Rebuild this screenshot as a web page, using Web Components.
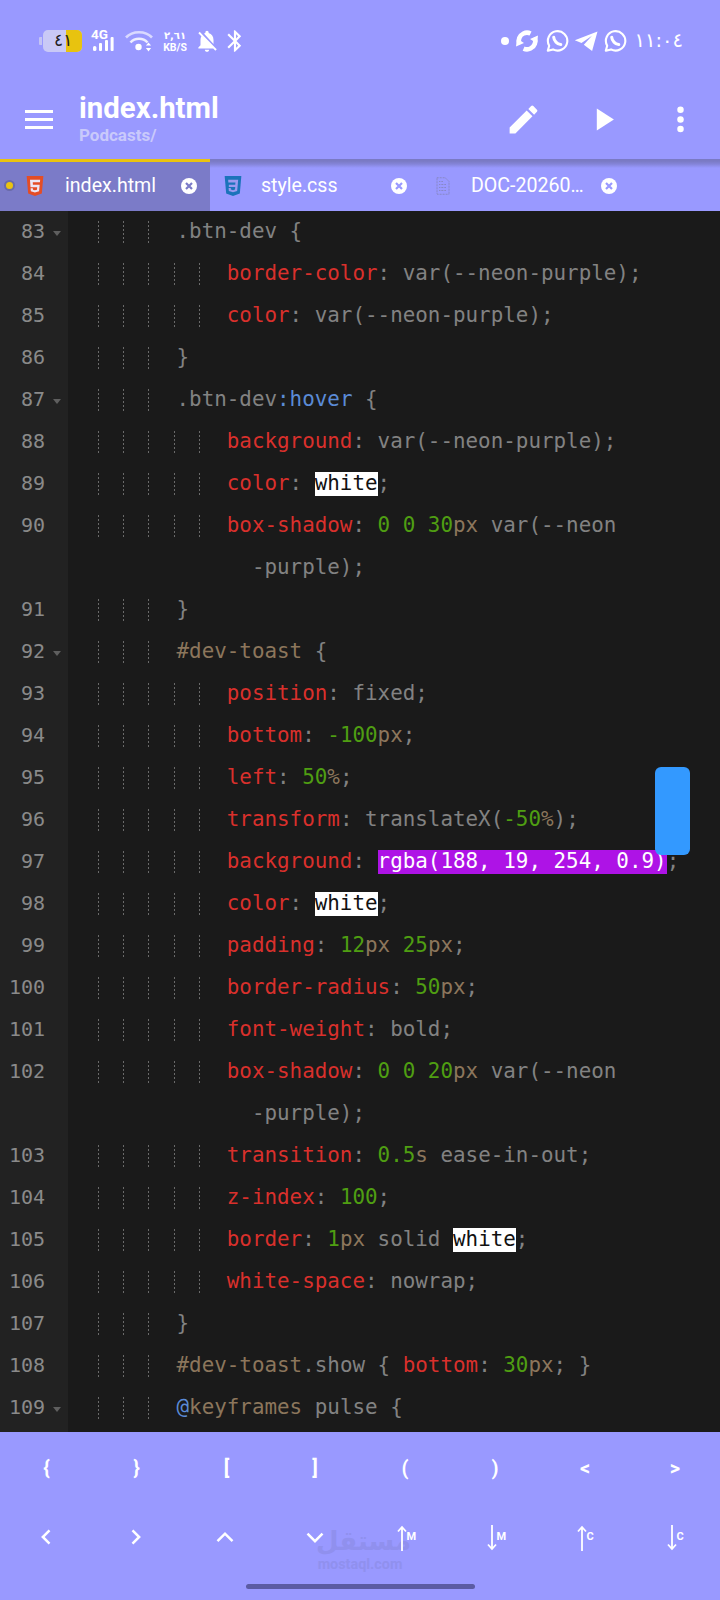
<!DOCTYPE html>
<html lang="en"><head><meta charset="utf-8"><title>index.html</title>
<style>
html,body{margin:0;padding:0;width:720px;height:1600px;overflow:hidden;background:#1a1a1a;font-family:Roboto,"Liberation Sans",sans-serif}
</style>
<script>
function def(name, css, html){
  customElements.define(name, class extends HTMLElement{
    constructor(){super();this.attachShadow({mode:'open'});}
    connectedCallback(){
      const body = typeof html==='function'?html(this):html;
      this.shadowRoot.innerHTML='<style>'+css+'</style>'+body;
    }
  });
}
def('status-bar',`
:host{display:flex;align-items:center;height:80px;box-sizing:border-box;padding:2px 37px 0 39px;background:#9999ff;color:#fff}
.grow{flex:1}
`,`<slot name="left"></slot><div class="grow"></div><slot name="right"></slot>`);

def('status-group',`
:host{display:flex;align-items:center}
::slotted(*){flex:none}
`,`<slot></slot>`);

def('battery-icon',`
:host{display:block;position:relative;width:43px;height:22px}
.nub{position:absolute;left:0;top:7px;width:3px;height:8px;background:#c4c4f4;border-radius:1px 0 0 1px}
.body{position:absolute;left:4px;top:0;right:0;bottom:0;border-radius:5px;overflow:hidden;display:flex;background:#c9c9f6}
.fill{margin-left:auto;width:16px;background:#e8c30f}
.t{position:absolute;left:15px;top:0;width:18px;text-align:center;font:400 17px/21px "DejaVu Sans",sans-serif;color:#222}
`,`<div class="nub"></div><div class="body"><div class="fill"></div></div><span class="t">٤١</span>`);

def('signal-icon',`
:host{display:block;position:relative;width:23px;height:22px;margin-left:9px}
.t{position:absolute;left:0;top:-2px;font:700 13.500px/13px Roboto,sans-serif;color:#fff}
svg{position:absolute;left:0;top:0}
`,`<span class="t">4G</span><svg width="23" height="22" viewBox="0 0 23 22"><g fill="#fff"><rect x="2" y="16" width="3.4" height="5" rx="1.6"/><rect x="8" y="13" width="3" height="8" rx="1"/><rect x="14" y="10" width="3" height="11" rx="1"/><rect x="19.6" y="7" width="3" height="14" rx="1"/></g></svg>`);

def('wifi-icon',`
:host{display:block;width:28px;height:22px;margin-left:11px}
`,`<svg width="28" height="22" viewBox="0 0 28 22" fill="none"><path d="M1 7.500C7.500 .5 20.500 .5 27 7.500" stroke="#d9d9ff" stroke-width="2.600"/><path d="M5.500 12.500C10 7.500 18 7.500 22.500 12.500" stroke="#eeeeff" stroke-width="2.600"/><circle cx="13.500" cy="17" r="3.200" fill="#fff"/><path d="M23.500 12.500l2.600 3h-5.200zM23.500 21.500l2.600-3.500h-5.200z" fill="#fff"/></svg>`);

def('speed-icon',`
:host{display:flex;flex-direction:column;align-items:center;width:26px;margin-left:9px;color:#fff}
.a{font:700 10px/12px "DejaVu Sans",sans-serif}
.b{font:700 10.500px/11px Roboto,sans-serif;white-space:nowrap}
`,`<span class="a">٢,٦١</span><span class="b">KB/S</span>`);

def('svg-icon',`
:host{display:block;line-height:0}
`,(h)=>{
  const s=h.getAttribute('size')||24, i=h.getAttribute('name');
  const P={
   bell:'<path fill="#fff" d="M20 18.690L7.840 6.140 5.270 3.490 4 4.760l2.800 2.800v.01c-.52.99-.8 2.160-.8 3.420v5l-2 2v1h13.730l2 2L21 19.720l-1-1.030zM12 22c1.110 0 2-.89 2-2h-4c0 1.110.89 2 2 2zm6-7.320V11c0-3.080-1.640-5.640-4.500-6.320V4c0-.83-.67-1.500-1.500-1.500s-1.500.67-1.500 1.500v.68c-.15.03-.29.08-.42.12-.1.03-.2.07-.3.11h-.01c-.2.08-.4.17-.59.27-.01 0-.01 0-.02.01L18 14.680z"/>',
   bt:'<path fill="#fff" d="M17.710 7.710L12 2h-1v7.590L6.410 5 5 6.410 10.590 12 5 17.590 6.410 19 11 14.410V22h1l5.710-5.710-4.300-4.290 4.300-4.290zM13 5.830l1.880 1.880L13 9.590V5.830zm1.880 10.460L13 18.170v-3.760l1.880 1.880z"/>',
   sync:'<circle cx="12" cy="12" r="8.300" fill="none" stroke="#fff" stroke-width="4.600" stroke-dasharray="20 6.100" transform="rotate(-25 12 12)"/><path fill="#fff" d="M23 6.500l-1 8-7-4.500zM1 17.500l1-8 7 4.500z"/>',
   wa:'<path fill="none" stroke="#fff" stroke-width="2.100" stroke-linejoin="round" d="M2.800 21.800l1.400-5.100A9.700 9.700 0 1 1 8 20.400z"/><path fill="none" stroke="#fff" stroke-width="3" stroke-linecap="round" d="M8.700 8.200c.2 3.600 3.500 7 7.100 7.400"/>',
   tg:'<path fill="#fff" d="M23.500 2.500L.8 11.200l6.700 2.700L18 6.700l-8.200 9 8.300 6.300z"/>',
   pencil:'<path fill="#fff" d="M3 17.250V21h3.750L17.810 9.940l-3.750-3.750L3 17.250zM20.710 7.040a1 1 0 0 0 0-1.410l-2.340-2.340a1 1 0 0 0-1.410 0l-1.830 1.830 3.750 3.750 1.830-1.830z"/>',
   play:'<path fill="#fff" d="M7 4.900v14.200l11.100-7.100z"/>',
   more:'<g fill="#fff"><circle cx="12" cy="5.700" r="2.100"/><circle cx="12" cy="12" r="2.100"/><circle cx="12" cy="18.100" r="2.100"/></g>',
   left:'<path fill="none" stroke="#fff" stroke-width="3" d="M15 4l-8 8 8 8"/>',
   right:'<path fill="none" stroke="#fff" stroke-width="3" d="M9 4l8 8-8 8"/>',
   up:'<path fill="none" stroke="#fff" stroke-width="3" d="M3 17l9-9 9 9"/>',
   down:'<path fill="none" stroke="#fff" stroke-width="3" d="M3 8l9 9 9-9"/>',
   html:'<path fill="#e44d26" d="M2 0h20l-1.800 21L12 24l-8.200-3z"/><path fill="#ece6f5" d="M6 4.500h12.200l-.3 3H9.300l.2 3h8.100l-.7 7.700-5 1.500-4.900-1.500-.3-3.500h2.700l.2 1.700 2.300.7 2.500-.7.2-3H6.600z"/>',
   css:'<path fill="#1b73ba" d="M2 0h20l-1.800 21L12 24l-8.200-3z"/><path fill="#9a9af0" d="M6.200 4.500h12l-.7 8.200-.5 5.300-5 1.600-5-1.600-.3-3.500h2.600l.2 1.700 2.500.8 2.400-.8.300-3H7v-2.700h7.700l.2-2.700H6.400z"/>',
   doc:'<g fill="none" stroke="#8080ac" stroke-width="1.200" stroke-dasharray="1 1"><path d="M4 1h11l5 5v17H4zM7 10h10M7 14h10M7 18h10M7 6h6"/></g>'
  };
  return '<svg width="'+s+'" height="'+s+'" viewBox="0 0 24 24">'+(P[i]||'')+'</svg>';
});

def('app-bar',`
:host{display:flex;align-items:center;height:79px;box-sizing:border-box;background:#9999ff;color:#fff;padding:0 21px 0 25px}
.menu{width:28px;display:flex;flex-direction:column;gap:5.500px;margin-right:26px}
.menu i{display:block;height:2.500px;background:#fff}
.title{flex:1;display:flex;flex-direction:column;margin-top:-4px}
.t1{font:700 29.400px/34px Roboto,sans-serif}
.t2{font:700 17px/20px Roboto,sans-serif;color:#c9c9fb}
.acts{display:flex;align-items:center}
`,`<div class="menu"><i></i><i></i><i></i></div><div class="title"><span class="t1"><slot name="title"></slot></span><span class="t2"><slot name="path"></slot></span></div><div class="acts"><slot></slot></div>`);

def('tab-bar',`
:host{display:flex;height:52px;background:linear-gradient(#7a7ac4 0 2px,#8484d8 5px,#9999ff 9px)}
`,`<slot></slot>`);

def('tab-item',`
:host{display:flex;align-items:center;flex:none;width:210px;height:52px;box-sizing:border-box;position:relative;color:#fff;padding:1px 0 0 11px}
:host([active]){background:#7b7bc8;border-top:3px solid #eac30f;padding:0 0 2px 6px}
.dot{width:7px;height:7px;border-radius:50%;background:#eac30f;box-shadow:0 0 0 2px #6a6aa8;flex:none;margin-right:10px}
.ic{display:flex;flex:none;width:24px;justify-content:center;margin-right:16px}
:host([active]) .ic{margin-right:18px}
.lab{flex:none;width:129px;font:400 19.600px/24px Roboto,sans-serif;white-space:nowrap}
:host([active]) .lab{width:115px}
.x{flex:none;width:16px;height:16px;border-radius:50%;background:#fff;display:block;margin-left:1px}
`,(h)=>`${h.hasAttribute('active')?'<span class="dot"></span>':''}<span class="ic"><slot name="icon"></slot></span><span class="lab"><slot></slot></span><svg class="x" viewBox="0 0 16 16"><path d="M5 5l6 6M11 5l-6 6" stroke="${h.hasAttribute('active')?'#7b7bc8':'#9999ff'}" stroke-width="2.200"/></svg>`);

def('code-editor',`
:host{display:block;position:relative;height:1221px;overflow:hidden;background:#1a1a1a;font:20.880px "DejaVu Sans Mono",monospace;color:#828282}
.thumb{position:absolute;left:655px;top:556px;width:35px;height:88px;border-radius:6px;background:#3399ff}
.rail{position:absolute;left:0;top:0;bottom:0;width:68px;background:#222}
.lines{position:relative}
`,`<div class="rail"></div><div class="lines"><slot></slot></div><div class="thumb"></div>`);

def('code-line',`
:host{display:flex;align-items:center;height:42px;white-space:pre}
.g{flex:none;width:68px;height:42px;display:flex;align-items:center;box-sizing:border-box;background:#222;color:#8a8a8a;font-size:20px}
.n{width:45px;text-align:right;margin-top:-2px}
.f{width:0;height:0;border:4.500px solid transparent;border-top:5px solid #5f5f5f;border-bottom:0;margin:2px 0 0 8px}
.c{flex:1;display:flex;align-items:center;padding-left:8px}
.i{display:flex;flex:none;margin-left:-2px;margin-right:2px}
.u{flex:none;width:2ch;height:22px;box-sizing:border-box;position:relative}
.u b{position:absolute;right:0;top:0;bottom:0;width:1px;background:repeating-linear-gradient(#6a6a6a 0 2px,transparent 2px 4px)}
.u.e b{display:none}
.txt{height:24px;line-height:24px;margin-top:-2px}
::slotted(.p){color:#d9302c}
::slotted(.k){color:#4f9e12}
::slotted(.u){color:#8c765c}
::slotted(.h){color:#5b8bd6}
::slotted(.w){display:inline-block;line-height:24px;background:linear-gradient(transparent 1px,#fff 1px);box-shadow:0 1px 0 #fff;color:#111}
::slotted(.m){display:inline-block;line-height:24px;background:linear-gradient(transparent 1px,#ae13e6 1px);box-shadow:0 1px 0 #ae13e6;color:#fff}
`,(h)=>{
  const lv=+h.getAttribute('level')||0, wrap=h.hasAttribute('wrap');
  const n=lv/2;
  let g='';
  for(let i=0;i<n;i++) g+='<span class="u'+((i===n-1||wrap)?' e':'')+'"><b></b></span>';
  const fold=h.hasAttribute('fold')?'<span class="f"></span>':'';
  return '<div class="g"><span class="n">'+(h.getAttribute('num')||'')+'</span>'+fold+'</div><div class="c"><span class="i">'+g+'</span><span class="txt"><slot></slot></span></div>';
});

def('key-bar',`
:host{display:block;position:relative;height:168px;box-sizing:border-box;background:#9999ff;padding-top:2px;color:#fff}
.grid{display:grid;grid-template-columns:repeat(8,90px);grid-auto-rows:69px}
.home{width:229px;height:5px;border-radius:3px;background:#5b5ba3;margin:12px auto 0}
.wm{position:absolute;left:316px;top:92px;width:88px;text-align:center;color:#9090ee;pointer-events:none;white-space:nowrap}
.wm b{display:block;font:700 26px/34px "DejaVu Sans",sans-serif}
.wm i{display:block;font:700 14.400px/16px Roboto,sans-serif;margin-top:-1px}
`,`<div class="wm"><b>مستقل</b><i>mostaql.com</i></div><div class="grid"><slot></slot></div><div class="home"></div>`);

def('key-cap',`
:host{display:flex;align-items:center;justify-content:center;font:700 20px/24px Roboto,sans-serif;color:#fff;position:relative;margin-top:-1px}
`,`<slot></slot>`);

def('arrow-key',`
:host{display:flex;align-items:center;justify-content:center;color:#fff;margin-left:2px;margin-top:1px}
svg{display:block}
span{font:700 11px/12px Roboto,sans-serif;margin-top:-1px;width:9px}
`,(h)=>{
  const up=h.getAttribute('dir')==='up';
  const d=up?'M5 26V2M1 6.500L5 2l4 4.500':'M5 0v24M1 19.500L5 24l4-4.500';
  return '<svg width="10" height="26" viewBox="0 0 10 26" fill="none"><path d="'+d+'" stroke="#fff" stroke-width="1.800"/></svg><span>'+h.getAttribute('k')+'</span>';
});
</script></head>
<body>
<status-bar>
  <status-group slot="left">
    <battery-icon></battery-icon><signal-icon></signal-icon><wifi-icon></wifi-icon><speed-icon></speed-icon>
    <svg-icon name="bell" size="26" style="margin-left:6px"></svg-icon><svg-icon name="bt" size="26" style="margin-left:2px"></svg-icon>
  </status-group>
  <status-group slot="right" style="font:400 19.500px/24px 'DejaVu Sans',sans-serif;color:#fff">
    <span style="width:8px;height:8px;border-radius:50%;background:#fff;margin-right:6px"></span>
    <svg-icon name="sync" size="24" style="margin-right:6px"></svg-icon>
    <svg-icon name="wa" size="24" style="margin-right:5px"></svg-icon>
    <svg-icon name="tg" size="24" style="margin-right:5px"></svg-icon>
    <svg-icon name="wa" size="24" style="margin-right:8px"></svg-icon>
    <span>١١:٠٤</span>
  </status-group>
</status-bar>
<app-bar>
  <span slot="title">index.html</span>
  <span slot="path">Podcasts/</span>
  <svg-icon name="pencil" size="37" style="margin-right:44px"></svg-icon>
  <svg-icon name="play" size="37" style="margin-right:39px"></svg-icon>
  <svg-icon name="more" size="37"></svg-icon>
</app-bar>
<tab-bar>
  <tab-item active><svg-icon slot="icon" name="html" size="20"></svg-icon>index.html</tab-item>
  <tab-item><svg-icon slot="icon" name="css" size="20"></svg-icon>style.css</tab-item>
  <tab-item><svg-icon slot="icon" name="doc" size="18"></svg-icon>DOC-20260…</tab-item>
</tab-bar>
<code-editor>
<code-line num="83" fold level="8">.btn-dev {</code-line>
<code-line num="84" level="12"><span class="p">border-color</span>: var(--neon-purple);</code-line>
<code-line num="85" level="12"><span class="p">color</span>: var(--neon-purple);</code-line>
<code-line num="86" level="8">}</code-line>
<code-line num="87" fold level="8">.btn-dev<span class="h">:hover</span> {</code-line>
<code-line num="88" level="12"><span class="p">background</span>: var(--neon-purple);</code-line>
<code-line num="89" level="12"><span class="p">color</span>: <span class="w">white</span>;</code-line>
<code-line num="90" level="12"><span class="p">box-shadow</span>: <span class="k">0 0 30</span><span class="u">px</span> var(--neon</code-line>
<code-line wrap level="14">-purple);</code-line>
<code-line num="91" level="8">}</code-line>
<code-line num="92" fold level="8"><span class="u">#dev-toast</span> {</code-line>
<code-line num="93" level="12"><span class="p">position</span>: fixed;</code-line>
<code-line num="94" level="12"><span class="p">bottom</span>: <span class="k">-100</span><span class="u">px</span>;</code-line>
<code-line num="95" level="12"><span class="p">left</span>: <span class="k">50</span><span class="u">%</span>;</code-line>
<code-line num="96" level="12"><span class="p">transform</span>: translateX(<span class="k">-50</span><span class="u">%</span>);</code-line>
<code-line num="97" level="12"><span class="p">background</span>: <span class="m">rgba(188, 19, 254, 0.9)</span>;</code-line>
<code-line num="98" level="12"><span class="p">color</span>: <span class="w">white</span>;</code-line>
<code-line num="99" level="12"><span class="p">padding</span>: <span class="k">12</span><span class="u">px</span> <span class="k">25</span><span class="u">px</span>;</code-line>
<code-line num="100" level="12"><span class="p">border-radius</span>: <span class="k">50</span><span class="u">px</span>;</code-line>
<code-line num="101" level="12"><span class="p">font-weight</span>: bold;</code-line>
<code-line num="102" level="12"><span class="p">box-shadow</span>: <span class="k">0 0 20</span><span class="u">px</span> var(--neon</code-line>
<code-line wrap level="14">-purple);</code-line>
<code-line num="103" level="12"><span class="p">transition</span>: <span class="k">0.5</span><span class="u">s</span> ease-in-out;</code-line>
<code-line num="104" level="12"><span class="p">z-index</span>: <span class="k">100</span>;</code-line>
<code-line num="105" level="12"><span class="p">border</span>: <span class="k">1</span><span class="u">px</span> solid <span class="w">white</span>;</code-line>
<code-line num="106" level="12"><span class="p">white-space</span>: nowrap;</code-line>
<code-line num="107" level="8">}</code-line>
<code-line num="108" level="8"><span class="u">#dev-toast</span>.show { <span class="p">bottom</span>: <span class="k">30</span><span class="u">px</span>; }</code-line>
<code-line num="109" fold level="8"><span class="h">@</span><span class="u">keyframes</span> pulse {</code-line>
</code-editor>
<key-bar>
  <key-cap style="padding-left:3px">{</key-cap><key-cap style="padding-left:3px">}</key-cap><key-cap style="padding-left:3px">[</key-cap><key-cap>]</key-cap><key-cap>(</key-cap><key-cap>)</key-cap><key-cap>&lt;</key-cap><key-cap>&gt;</key-cap>
  <key-cap style="padding-left:3px"><svg-icon name="left" size="20"></svg-icon></key-cap>
  <key-cap><svg-icon name="right" size="20"></svg-icon></key-cap>
  <key-cap><svg-icon name="up" size="20"></svg-icon></key-cap>
  <key-cap><svg-icon name="down" size="20"></svg-icon></key-cap>
  <key-cap><arrow-key dir="up" k="M"></arrow-key></key-cap>
  <key-cap><arrow-key dir="down" k="M"></arrow-key></key-cap>
  <key-cap><arrow-key dir="up" k="C"></arrow-key></key-cap>
  <key-cap><arrow-key dir="down" k="C"></arrow-key></key-cap>
</key-bar>
</body></html>
